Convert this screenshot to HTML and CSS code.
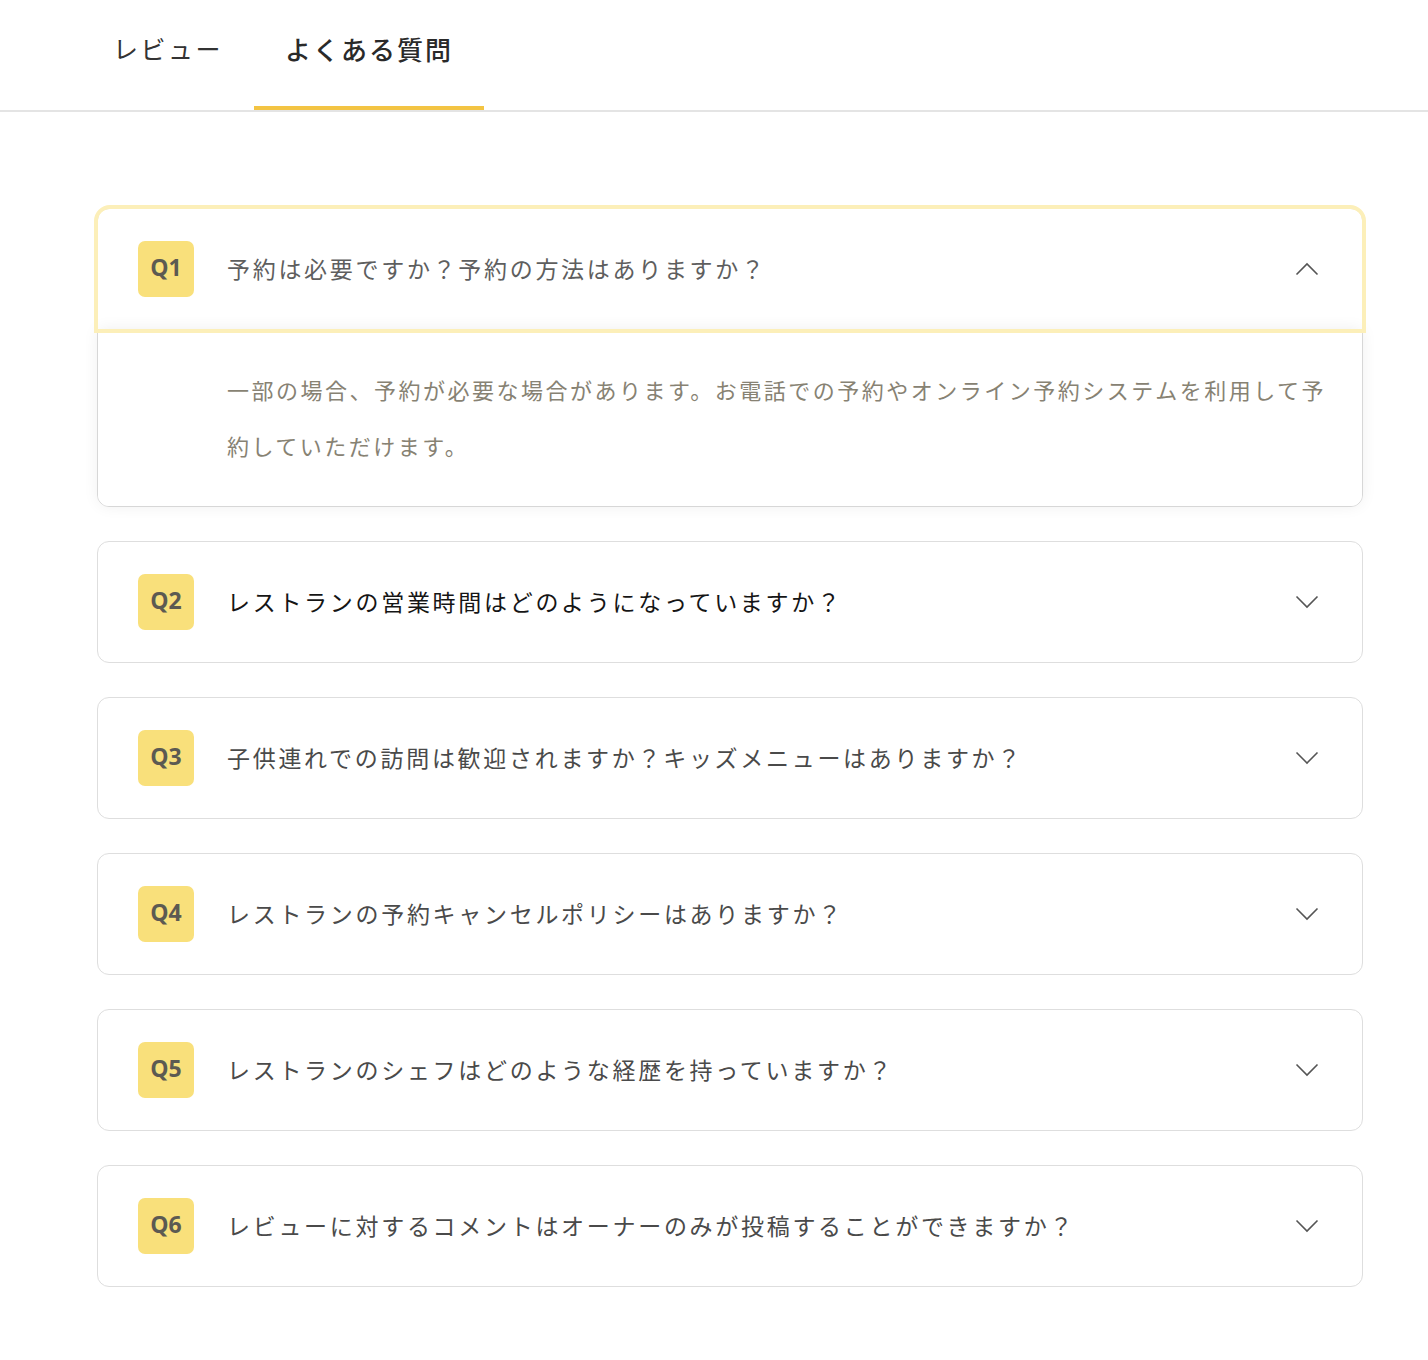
FILE: index.html
```html
<!DOCTYPE html>
<html lang="ja">
<head>
<meta charset="utf-8">
<title>よくある質問</title>
<link rel="stylesheet" href="styles.css">
</head>
<body>
<nav class="tabs">
  <a class="tab">レビュー</a>
  <a class="tab tab-active">よくある質問</a>
</nav>
<main class="faq">
  <section class="item item-open">
    <div class="head">
      <span class="badge">Q1</span>
      <span class="q q-muted">予約は必要ですか？予約の方法はありますか？</span>
      <svg class="chev" width="24" height="14" viewBox="0 0 24 14"><polyline points="1.5,12.5 12,2 22.5,12.5" fill="none" stroke="#555" stroke-width="1.6"/></svg>
    </div>
    <div class="panel">一部の場合、予約が必要な場合があります。お電話での予約やオンライン予約システムを利用して予約していただけます。</div>
  </section>
  <section class="item">
    <div class="head">
      <span class="badge">Q2</span>
      <span class="q q-dark">レストランの営業時間はどのようになっていますか？</span>
      <svg class="chev" width="24" height="14" viewBox="0 0 24 14"><polyline points="1.5,1.5 12,12 22.5,1.5" fill="none" stroke="#555" stroke-width="1.6"/></svg>
    </div>
  </section>
  <section class="item">
    <div class="head">
      <span class="badge">Q3</span>
      <span class="q">子供連れでの訪問は歓迎されますか？キッズメニューはありますか？</span>
      <svg class="chev" width="24" height="14" viewBox="0 0 24 14"><polyline points="1.5,1.5 12,12 22.5,1.5" fill="none" stroke="#555" stroke-width="1.6"/></svg>
    </div>
  </section>
  <section class="item">
    <div class="head">
      <span class="badge">Q4</span>
      <span class="q">レストランの予約キャンセルポリシーはありますか？</span>
      <svg class="chev" width="24" height="14" viewBox="0 0 24 14"><polyline points="1.5,1.5 12,12 22.5,1.5" fill="none" stroke="#555" stroke-width="1.6"/></svg>
    </div>
  </section>
  <section class="item">
    <div class="head">
      <span class="badge">Q5</span>
      <span class="q">レストランのシェフはどのような経歴を持っていますか？</span>
      <svg class="chev" width="24" height="14" viewBox="0 0 24 14"><polyline points="1.5,1.5 12,12 22.5,1.5" fill="none" stroke="#555" stroke-width="1.6"/></svg>
    </div>
  </section>
  <section class="item">
    <div class="head">
      <span class="badge">Q6</span>
      <span class="q">レビューに対するコメントはオーナーのみが投稿することができますか？</span>
      <svg class="chev" width="24" height="14" viewBox="0 0 24 14"><polyline points="1.5,1.5 12,12 22.5,1.5" fill="none" stroke="#555" stroke-width="1.6"/></svg>
    </div>
  </section>
</main>
</body>
</html>
```

FILE: styles.css
```css
html, body {
  margin: 0;
  padding: 0;
  background: #ffffff;
}

body {
  font-family: "Noto Sans CJK JP", "Noto Sans", sans-serif;
  color: #333;
}

.tabs {
  display: flex;
  padding-left: 82px;
  border-bottom: 2px solid #e4e4e4;
}

.tab {
  display: flex;
  align-items: center;
  height: 96px;
  padding: 0 31px 10px;
  font-size: 25px;
  letter-spacing: 2.5px;
  color: #333;
  border-bottom: 4px solid transparent;
}

.tab-active {
  font-size: 26px;
  letter-spacing: 2px;
  font-weight: 500;
  color: #2a2a2a;
  border-bottom-color: #f3c443;
}

.faq {
  display: flex;
  flex-direction: column;
  gap: 34px;
  width: 1266px;
  margin-left: 97px;
  padding-top: 96px;
  padding-bottom: 80px;
}

.item {
  border: 1px solid #dedede;
  border-radius: 12px;
  background: #fff;
}

.head {
  display: flex;
  align-items: center;
  padding: 32px 43px 32px 40px;
  border-radius: 11px;
}

.item-open .head {
  outline: 4px solid #fcefb9;
  outline-offset: 0;
  border-radius: 12px 12px 0 0;
}

.badge {
  flex: none;
  display: flex;
  align-items: center;
  justify-content: center;
  width: 56px;
  height: 56px;
  padding-bottom: 4px;
  box-sizing: border-box;
  border-radius: 7px;
  background: #f9e07b;
  color: #5c5a52;
  font-family: "Open Sans", "Noto Sans", sans-serif;
  font-weight: 700;
  font-size: 23px;
}

.q {
  flex: 1;
  margin-left: 33px;
  font-size: 23px;
  letter-spacing: 2.7px;
  color: #4a4a4a;
  padding-bottom: 2px;
}

.q-muted {
  color: #5e5e5e;
}

.q-dark {
  color: #151515;
}

.chev {
  flex: none;
  display: block;
}

.panel {
  padding: 32px 24px 33px 129px;
  font-size: 22px;
  line-height: 56px;
  letter-spacing: 2.5px;
  color: #878273;
  border-radius: 0 0 11px 11px;
  box-shadow: 0 0 16px rgba(0, 0, 0, 0.07);
  background: #fff;
}
```
